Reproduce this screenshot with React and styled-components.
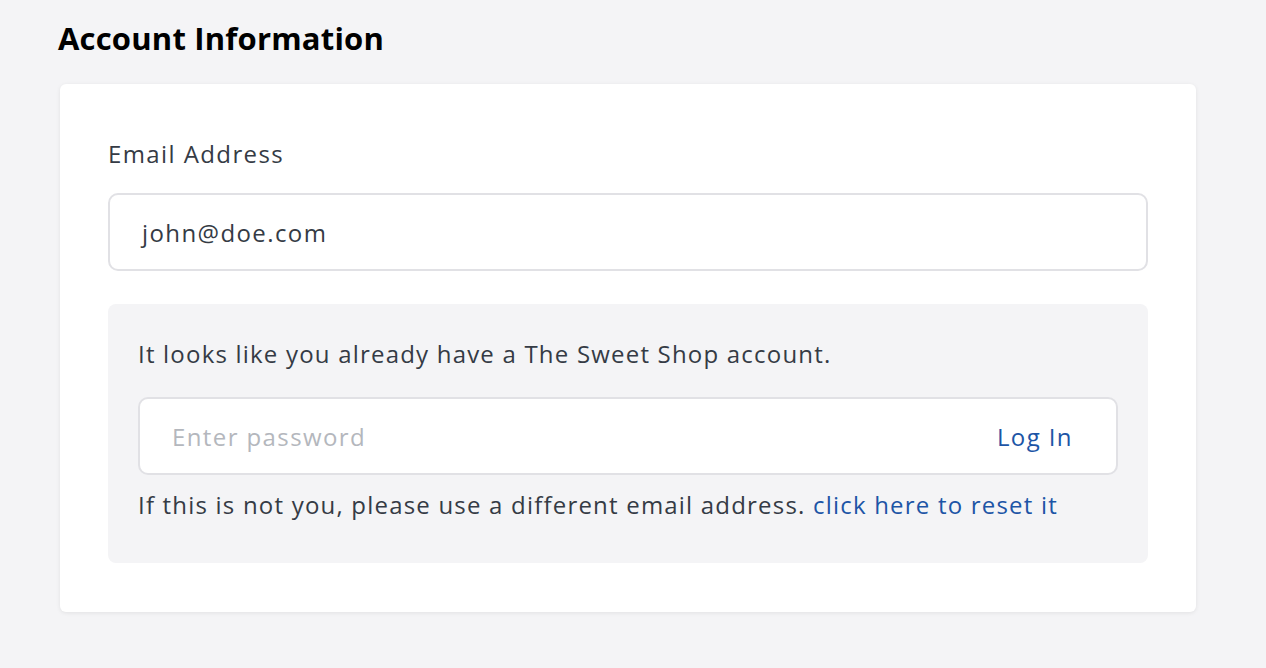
import styled, { createGlobalStyle } from 'styled-components'

const Global = createGlobalStyle`
  html, body {
    margin: 0;
    background: #f4f4f6;
    font-family: "Open Sans", Lato, sans-serif;
    color: #353b45;
  }
`

const Page = styled.div`
  padding: 18px 70px 56px 58px;
`

const Title = styled.h1`
  margin: 0 0 26px;
  font-size: 31px;
  font-weight: 700;
  color: #000;
  line-height: 40px;
  letter-spacing: 0.2px;
`

const Card = styled.div`
  margin-left: 2px;
  background: #fff;
  border-radius: 6px;
  box-shadow: 0 1px 4px rgba(0, 0, 0, 0.08);
  padding: 52px 48px 49px;
  letter-spacing: 1.2px;
`

const Label = styled.div`
  font-size: 24px;
  line-height: 36px;
  margin-bottom: 21px;
  letter-spacing: 1.4px;
`

const Field = styled.div`
  display: flex;
  align-items: center;
  justify-content: space-between;
  height: 78px;
  box-sizing: border-box;
  border: 2px solid #e1e1e5;
  border-radius: 10px;
  background: #fff;
  padding: 0 43px 0 ${p => p.$inset}px;
  font-size: 24px;
  letter-spacing: 1.4px;
  color: ${p => (p.$placeholder ? '#b4b7bd' : '#353b45')};
`

const Notice = styled.div`
  margin-top: 33px;
  background: #f4f4f6;
  border-radius: 8px;
  padding: 32px 30px 40px;
`

const Text = styled.p`
  margin: 0;
  font-size: 24px;
  line-height: 36px;
  margin-top: ${p => p.$gap || 0}px;
`

const Gap = styled.div`
  height: 25px;
`

const Link = styled.a`
  color: #1d55a6;
  text-decoration: none;
  cursor: pointer;
`

export default function App() {
  return (
    <>
      <Global />
      <Page>
        <Title>Account Information</Title>
        <Card>
          <Label>Email Address</Label>
          <Field $inset={32}>john@doe.com</Field>
          <Notice>
            <Text>It looks like you already have a The Sweet Shop account.</Text>
            <Gap />
            <Field $inset={32} $placeholder>
              Enter password
              <Link>Log In</Link>
            </Field>
            <Text $gap={12}>
              If this is not you, please use a different email address.{' '}
              <Link>click here to reset it</Link>
            </Text>
          </Notice>
        </Card>
      </Page>
    </>
  )
}
